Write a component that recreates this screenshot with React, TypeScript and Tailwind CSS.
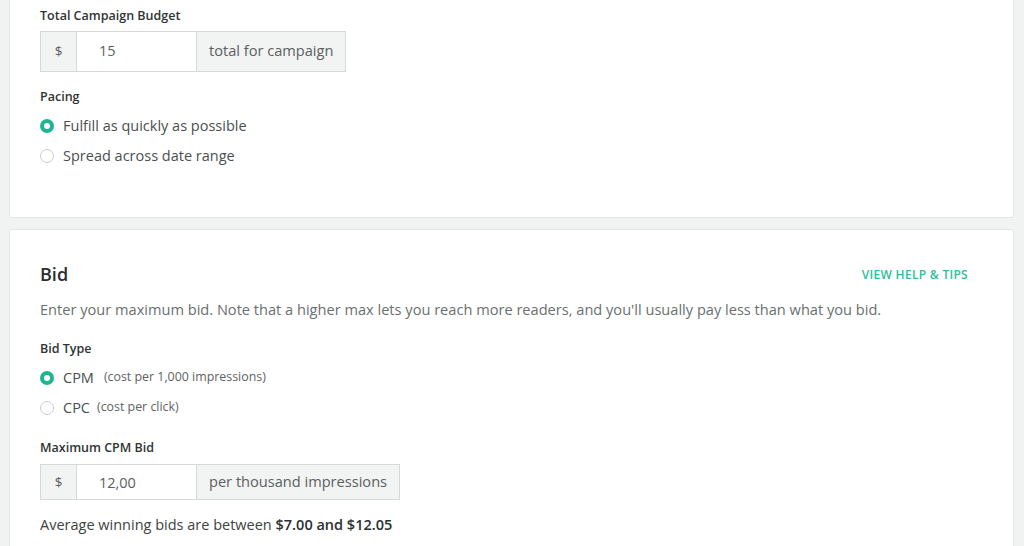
import React from "react";

function Radio({ checked }: { checked?: boolean }) {
  return checked ? (
    <span className="w-[14px] h-[14px] rounded-full bg-[#1fb592] flex items-center justify-center shrink-0">
      <span className="w-[6px] h-[6px] rounded-full bg-white" />
    </span>
  ) : (
    <span className="w-[14px] h-[14px] rounded-full border border-[#c9cccc] bg-white shrink-0" />
  );
}

function InputGroup({ value, suffix, h }: { value: string; suffix: string; h: string }) {
  return (
    <div className={`flex border border-[#d6d9d9] bg-[#f2f3f3] text-[#5b6060] ${h}`}>
      <div className="w-[35px] flex items-center justify-center text-[13.5px]">$</div>
      <div className="w-[121px] bg-white border-x border-[#d6d9d9] flex items-center pl-[22px] text-[14.5px]">{value}</div>
      <div className="px-[12px] flex items-center text-[14.6px]">{suffix}</div>
    </div>
  );
}

export default function App() {
  return (
    <div className="w-[1024px] h-[546px] bg-[#f1f2f2] overflow-hidden font-['Open_Sans',sans-serif] text-[#3d4242]">
      <div className="ml-[9px] mr-[10px] bg-white border border-[#e3e6e6] rounded-b-[3px] h-[219px] mt-[-1px] pl-[30px] pr-[31px] pt-[7px]">
        <div className="text-[12.5px] font-semibold text-[#2f3434]">Total Campaign Budget</div>
        <div className="mt-[5px] w-fit">
          <InputGroup value="15" suffix="total for campaign" h="h-[41px]" />
        </div>
        <div className="mt-[16px] text-[12.5px] font-semibold text-[#2f3434]">Pacing</div>
        <div className="mt-[9px] flex flex-col gap-[10px] text-[14.5px] text-[#4a4f4f]">
          <label className="flex items-center gap-[9px] h-[20px]"><Radio checked />Fulfill as quickly as possible</label>
          <label className="flex items-center gap-[9px] h-[20px]"><Radio />Spread across date range</label>
        </div>
      </div>
      <div className="ml-[9px] mr-[10px] mt-[11px] bg-white border border-[#e3e6e6] rounded-t-[3px] h-[340px] pl-[30px] pr-[45px] pt-[31px]">
        <div className="flex items-center justify-between">
          <div className="text-[18px] font-semibold text-[#2a2f2f]">Bid</div>
          <div className="text-[12px] font-semibold tracking-[0.3px] text-[#2ebd9b]">VIEW HELP &amp; TIPS</div>
        </div>
        <div className="mt-[11px] text-[14.6px] text-[#6a6f6f]">
          Enter your maximum bid. Note that a higher max lets you reach more readers, and you'll usually pay less than what you bid.
        </div>
        <div className="mt-[19px] text-[12.5px] font-semibold text-[#2f3434]">Bid Type</div>
        <div className="mt-[9px] flex flex-col gap-[10px] text-[14.5px] text-[#4a4f4f]">
          <label className="flex items-center gap-[9px] h-[20px]"><Radio checked /><span>CPM</span><span className="ml-[1px] text-[12.4px] text-[#5d6262]">(cost per 1,000 impressions)</span></label>
          <label className="flex items-center gap-[9px] h-[20px]"><Radio /><span>CPC</span><span className="ml-[-2px] text-[12.4px] text-[#5d6262]">(cost per click)</span></label>
        </div>
        <div className="mt-[21px] text-[12.5px] font-semibold text-[#2f3434]">Maximum CPM Bid</div>
        <div className="mt-[7px] w-fit">
          <InputGroup value="12,00" suffix="per thousand impressions" h="h-[36px]" />
        </div>
        <div className="mt-[14px] text-[14.5px] text-[#3d4242]">
          Average winning bids are between <span className="font-semibold text-[#2a2f2f]">$7.00 and $12.05</span>
        </div>
      </div>
    </div>
  );
}
